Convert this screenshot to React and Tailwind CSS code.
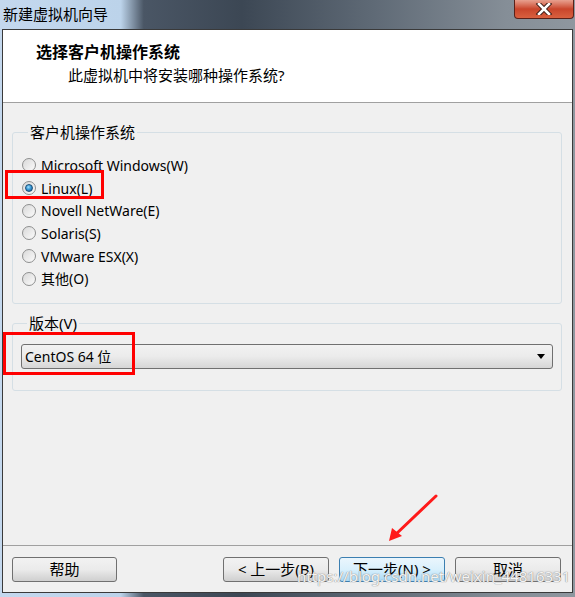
import { useState } from 'react'

const osList = [
  { id: 'win', label: 'Microsoft Windows(W)' },
  { id: 'linux', label: 'Linux(L)' },
  { id: 'netware', label: 'Novell NetWare(E)' },
  { id: 'solaris', label: 'Solaris(S)' },
  { id: 'esx', label: 'VMware ESX(X)' },
  { id: 'other', label: '其他(O)' },
]

const Radio = ({ checked }) => (
  <span className="relative w-[14px] h-[14px] rounded-full border border-[#8e8f8f] bg-gradient-to-br from-[#d9d9d9] to-[#fbfbfb] flex items-center justify-center shrink-0">
    {checked && (
      <span className="w-[8px] h-[8px] rounded-full border border-[#1b4f78] bg-[radial-gradient(circle_at_40%_35%,#9fe0ff_0%,#3a9ad6_45%,#0f4f86_100%)]" />
    )}
  </span>
)

const Button = ({ children, primary, ancho = 'w-[106px]' }) => (
  <button
    className={`h-[25px] ${ancho} rounded-[3px] border text-[15px] leading-none text-black flex items-center justify-center ${
      primary
        ? 'border-[#3c7fb1] bg-gradient-to-b from-[#eaf6fd] via-[#d9f0fc] to-[#a7d9f5]'
        : 'border-[#707070] bg-gradient-to-b from-[#f2f2f2] via-[#ebebeb] to-[#cfcfcf]'
    }`}
  >
    {children}
  </button>
)

export default function App() {
  const [os, setOs] = useState('linux')

  return (
    <div className="w-[575px] h-[597px] relative overflow-hidden flex flex-col font-['Noto_Sans','Noto_Sans_CJK_SC',sans-serif] bg-[linear-gradient(90deg,#c4d8ee_0%,#bcd3ea_21%,#4a5665_25%,#3c4754_42%,#5f6a76_65%,#858e97_88%,#8f979f_100%)]">
      {/* barra de titulo */}
      <div className="h-[29px] flex items-start justify-between shrink-0">
        <span className="pl-[3px] pt-[4px] text-[15px] leading-[20px] text-black">新建虚拟机向导</span>
        <div className="mr-[1px] w-[60px] h-[19px] rounded-b-[4px] border border-t-0 border-[#5a2119] bg-gradient-to-b from-[#e7a08f] via-[#c9452b] to-[#d9603f] flex items-center justify-center">
          <svg width="18" height="12" viewBox="0 0 18 12">
            <path d="M4 1 L14 11 M14 1 L4 11" stroke="#3a1a14" strokeWidth="4.5" strokeLinecap="square" />
            <path d="M4 1 L14 11 M14 1 L4 11" stroke="#ffffff" strokeWidth="2.6" strokeLinecap="square" />
          </svg>
        </div>
      </div>

      {/* contenido */}
      <div className="flex-1 mx-[2px] mb-[4px] border border-[#3a3a3a] bg-[#f0f0f0] flex flex-col">
        <div className="h-[73px] bg-white border-b border-[#a0a0a0] shrink-0">
          <div className="pl-[33px] pt-[11px] text-[16px] leading-[22px] font-bold text-black">选择客户机操作系统</div>
          <div className="pl-[65px] pt-[2px] text-[15px] leading-[20px] text-black">此虚拟机中将安装哪种操作系统?</div>
        </div>

        <div className="px-[9px] pt-[20px] flex-1">
          <fieldset className="border border-[#d5dfe5] rounded-[3px] mr-[1px] pl-[9px] pb-[13px]">
            <legend className="ml-[6px] px-[2px] text-[15px] leading-[18px] text-black">客户机操作系统</legend>
            <div className="pt-[13px] flex flex-col">
              {osList.map((o) => (
                <label key={o.id} className="h-[22.7px] flex items-center gap-[5px] text-[14px] text-black" onClick={() => setOs(o.id)}>
                  <Radio checked={os === o.id} />
                  <span>{o.label}</span>
                </label>
              ))}
            </div>
          </fieldset>

          <fieldset className="mt-[10px] border border-[#d5dfe5] rounded-[3px] mr-[1px] px-[8px] pb-[21px]">
            <legend className="ml-[6px] px-[2px] text-[15px] leading-[18px] text-black">版本(V)</legend>
            <div className="mt-[12px] h-[25px] rounded-[3px] border border-[#707070] bg-gradient-to-b from-[#f2f2f2] via-[#ebebeb] to-[#d6d6d6] flex items-center justify-between pl-[3px] pr-[7px]">
              <span className="text-[14px] text-black">CentOS 64 位</span>
              <svg width="8" height="5" viewBox="0 0 8 5">
                <path d="M0 0 H8 L4 5 Z" fill="#000" />
              </svg>
            </div>
          </fieldset>
        </div>

        {/* botones */}
        <div className="h-[47px] border-t border-[#a0a0a0] flex items-start pt-[11px] pl-[9px] pr-[11px] shrink-0">
          <Button ancho="w-[105px]">帮助</Button>
          <div className="flex-1" />
          <div className="flex gap-[10px]">
            <Button>&lt; 上一步(B)</Button>
            <Button primary>下一步(N) &gt;</Button>
            <Button>取消</Button>
          </div>
        </div>
      </div>

      {/* anotaciones */}
      <div className="absolute left-[5px] top-[170px] w-[99px] h-[29px] border-[3px] border-[#ff0000]" />
      <div className="absolute left-[3px] top-[332px] w-[132px] h-[43px] border-[3px] border-[#ff0000]" />
      <svg className="absolute left-[380px] top-[490px]" width="64" height="60" viewBox="0 0 64 60">
        <path d="M56 6 L14 46" stroke="#ff1a1a" strokeWidth="3" strokeLinecap="round" />
        <path d="M9 51 L12 38 L22 46 Z" fill="#ff1a1a" />
      </svg>
      <div className="absolute left-[297px] top-[566px] text-[15px] leading-[20px] text-white/90 [text-shadow:0_0_1px_#8a8a8a,0_0_1px_#8a8a8a]">
        https://blog.csdn.net/weixin_44816331
      </div>
    </div>
  )
}
